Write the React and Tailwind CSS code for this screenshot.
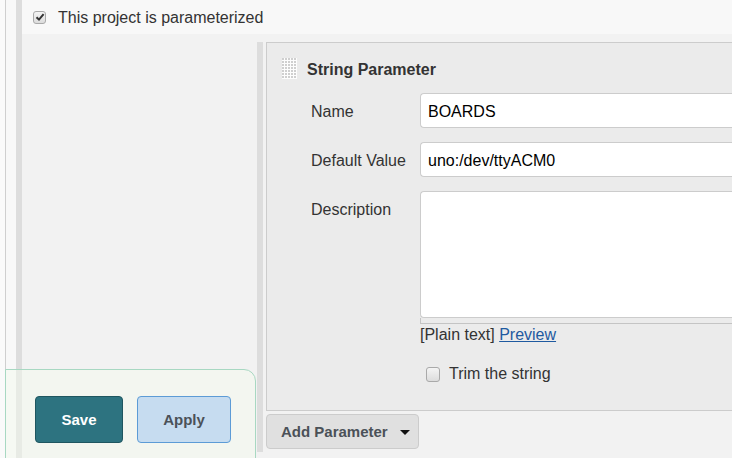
import React from "react";

const DragHandle = () => (
  <svg width="15" height="21" viewBox="0 0 15 21" className="shrink-0">
    <rect width="15" height="21" fill="#fdfdfd" />
    {Array.from({ length: 7 }).map((_, r) =>
      Array.from({ length: 5 }).map((_, c) => (
        <rect key={`${r}-${c}`} x={c * 3} y={r * 3} width="2" height="2" fill="#cfcfcf" />
      ))
    )}
  </svg>
);

const CheckBox = ({ checked, className = "" }) => (
  <span
    className={`inline-flex items-center justify-center rounded-[3px] border border-[#a9a9a9] bg-gradient-to-b from-[#f4f4f4] to-[#dcdcdc] ${className}`}
  >
    {checked && (
      <svg width="10" height="10" viewBox="0 0 10 10">
        <path d="M1.5 5.2 L4 7.6 L8.6 2.2" stroke="#333" strokeWidth="2" fill="none" />
      </svg>
    )}
  </span>
);

export default function App() {
  return (
    <div
      className="relative h-[458px] w-[732px] overflow-hidden bg-[#fafafa] text-[16px] text-[#333]"
      style={{ fontFamily: '"Liberation Sans", Arial, sans-serif' }}
    >
      <div className="flex h-full pl-[5px]">
        <div className="flex flex-1 border-l border-[#cfcfcf] bg-[#f8f8f8] pl-[10px]">
          <div className="flex flex-1 flex-col border-l-[6px] border-[#dddddd]">
            <div className="flex h-[34px] shrink-0 items-center bg-[#f8f8f8] pl-[11px]">
              <CheckBox checked className="h-[13px] w-[13px]" />
              <span className="ml-[12px] pt-[2px] leading-[18px]">This project is parameterized</span>
            </div>

            <div className="flex-1 bg-[#f2f2f2] pl-[235px] pt-[8px]">
              <div className="border-l-[6px] border-[#dddddd] pb-[3px] pl-[3px]">
                <div className="h-[369px] border-y border-l border-[#cccccc] bg-[#ebebeb]">
                  <div className="mt-[15px] flex h-[21px] items-center pl-[15px]">
                    <DragHandle />
                    <span className="ml-[10px] pt-[2px] font-bold leading-[18px]">String Parameter</span>
                  </div>

                  <div className="mt-[14px] pl-[44px]">
                    <div className="flex items-center">
                      <span className="w-[109px] shrink-0 pt-[2px]">Name</span>
                      <div className="flex h-[35px] flex-1 items-center rounded-l-[4px] border-y border-l border-[#cccccc] bg-white pl-[7px] pt-[2px] text-black">
                        BOARDS
                      </div>
                    </div>
                    <div className="mt-[14px] flex items-center">
                      <span className="w-[109px] shrink-0 pt-[2px]">Default Value</span>
                      <div className="flex h-[35px] flex-1 items-center rounded-l-[4px] border-y border-l border-[#cccccc] bg-white pl-[7px] pt-[2px] text-black">
                        uno:/dev/ttyACM0
                      </div>
                    </div>
                    <div className="mt-[14px] flex items-start">
                      <span className="w-[109px] shrink-0 pt-[10px] leading-[18px]">Description</span>
                      <div className="flex-1">
                        <div className="h-[127px] rounded-l-[4px] border-y border-l border-[#cccccc] bg-white" />
                        <div className="h-[6px] border-b border-l border-[#c4c4c4]" />
                        <div className="mt-[2px] leading-[18px]">
                          [Plain text]{" "}
                          <span className="text-[#1f5aa0] underline">Preview</span>
                        </div>
                        <div className="mt-[21px] flex items-center leading-[18px]">
                          <CheckBox className="ml-[6px] h-[15px] w-[14px]" />
                          <span className="ml-[9px]">Trim the string</span>
                        </div>
                      </div>
                    </div>
                  </div>
                </div>

                <button className="mt-[3px] flex h-[35px] w-[153px] items-center rounded-[4px] border border-[#cccccc] bg-[#e0e0e0] pl-[14px] pt-[2px] text-[15px] font-bold text-[#4b5158]">
                  Add Parameter
                  <svg width="10" height="6" viewBox="0 0 10 6" className="ml-[12px]">
                    <path d="M0 0 H10 L5 5 Z" fill="#111" />
                  </svg>
                </button>
              </div>
            </div>
          </div>
        </div>
      </div>

      <div className="absolute left-[5px] top-[369px] flex h-[100px] w-[251px] gap-[14px] rounded-tr-[12px] border border-[#a8d8c2] bg-[#f4faee]/50 pl-[29px] pt-[26px]">
        <button className="h-[47px] w-[88px] rounded-[4px] border border-[#1f5660] bg-[#2d7380] pt-[2px] text-[15px] font-bold text-white">
          Save
        </button>
        <button className="h-[47px] w-[94px] rounded-[4px] border border-[#5c9bd6] bg-[#c6dcf0] pt-[2px] text-[15px] font-bold text-[#4b5158]">
          Apply
        </button>
      </div>
    </div>
  );
}
